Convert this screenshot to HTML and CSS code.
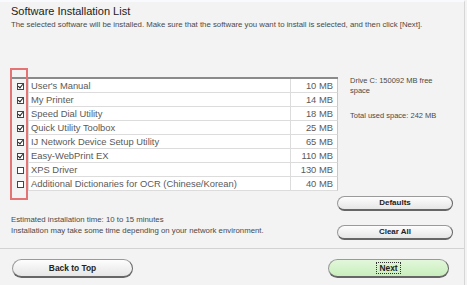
FILE: index.html
```html
<!DOCTYPE html>
<html lang="en">
<head>
  <meta charset="UTF-8">
  <title>Software Installation List</title>
  <link rel="stylesheet" href="styles.css">
</head>
<body>
  <div class="window">
    <header class="head">
      <h1>Software Installation List</h1>
      <p>The selected software will be installed. Make sure that the software you want to install is selected, and then click [Next].</p>
    </header>

    <main class="main">
      <section class="left">
        <div class="list">
          <div class="highlight"></div>
          <div class="row"><span class="cb on"></span><span class="name">User's Manual</span><span class="size">10 MB</span></div>
          <div class="row"><span class="cb on"></span><span class="name">My Printer</span><span class="size">14 MB</span></div>
          <div class="row"><span class="cb on"></span><span class="name">Speed Dial Utility</span><span class="size">18 MB</span></div>
          <div class="row"><span class="cb on"></span><span class="name">Quick Utility Toolbox</span><span class="size">25 MB</span></div>
          <div class="row"><span class="cb on"></span><span class="name">IJ Network Device Setup Utility</span><span class="size">65 MB</span></div>
          <div class="row"><span class="cb on"></span><span class="name">Easy-WebPrint EX</span><span class="size">110 MB</span></div>
          <div class="row"><span class="cb"></span><span class="name">XPS Driver</span><span class="size">130 MB</span></div>
          <div class="row"><span class="cb"></span><span class="name">Additional Dictionaries for OCR (Chinese/Korean)</span><span class="size">40 MB</span></div>
        </div>
        <div class="notes">
          <div>Estimated installation time: 10 to 15 minutes</div>
          <div>Installation may take some time depending on your network environment.</div>
        </div>
      </section>

      <aside class="right">
        <div class="info">Drive C: 150092 MB free<br>space</div>
        <div class="info used">Total used space: 242 MB</div>
        <button class="btn defaults">Defaults</button>
        <button class="btn clear">Clear All</button>
      </aside>
    </main>

    <footer class="foot">
      <button class="btn big">Back to Top</button>
      <button class="btn big next"><span class="focus">Next</span></button>
    </footer>
  </div>
</body>
</html>
```

FILE: styles.css
```css
body {
  margin: 0;
  background: #f3f3f3;
  font-family: "Liberation Sans", Arial, sans-serif;
  color: #333;
}
.window {
  width: 465px;
  height: 285px;
  border-right: 1px solid #d6d6d6;
  border-top: 2px solid #f8fafd;
  box-sizing: border-box;
}
.head { padding: 3px 0 0 11px; }
.head h1 {
  margin: 0;
  font-size: 11px;
  line-height: 13px;
  font-weight: normal;
  color: #222;
}
.head p {
  margin: 2px 0 0;
  font-size: 7.8px;
  line-height: 10px;
  color: #4a4a4a;
}
.main {
  display: flex;
  padding-left: 11px;
  margin-top: 47px;
}
.left { width: 327px; }
.list {
  position: relative;
  border-top: 2px solid #8a8a8a;
}
.highlight {
  position: absolute;
  left: -1px;
  top: -11px;
  width: 14px;
  height: 128px;
  border: 2px solid #e47474;
}
.row {
  display: grid;
  grid-template-columns: 17px 262px 48px;
  height: 14px;
}
.cb {
  align-self: center;
  justify-self: center;
  width: 5px;
  height: 5px;
  margin-left: 1px;
  border: 1px solid #444;
  background: #fff;
  position: relative;
}
.cb.on::after {
  content: "";
  position: absolute;
  left: 1px;
  top: -1px;
  width: 2px;
  height: 4px;
  border: solid #222;
  border-width: 0 1.2px 1.2px 0;
  transform: rotate(40deg);
}
.name, .size {
  background: #fff;
  border-bottom: 1px solid #dcdcdc;
  font-size: 9.4px;
  line-height: 13px;
  color: #5a5a5a;
  white-space: nowrap;
}
.name {
  border-left: 1px solid #dcdcdc;
  padding-left: 2px;
}
.size {
  border-left: 1px solid #dcdcdc;
  border-right: 1px solid #c8c8c8;
  text-align: right;
  padding-right: 4px;
}
.notes {
  margin-top: 23px;
  font-size: 7.8px;
  line-height: 11px;
  color: #4a4a4a;
}
.right {
  margin-left: -1px;
  width: 116px;
  display: flex;
  flex-direction: column;
}
.info {
  padding-left: 13px;
  font-size: 7.5px;
  line-height: 9.5px;
  color: #4a4a4a;
  margin-top: -1px;
}
.info.used { margin-top: 16px; }
.btn {
  font-family: "Liberation Sans", Arial, sans-serif;
  font-weight: bold;
  font-size: 8px;
  color: #222;
  height: 15px;
  padding: 0;
  border: 1px solid #9a9a9a;
  border-right-color: #666;
  border-bottom: 2px solid #666;
  border-radius: 9px;
  background: linear-gradient(#fdfdfd, #e6e6e6);
  box-sizing: border-box;
}
.defaults { margin-top: 75px; }
.clear { margin-top: 14px; }
.foot {
  margin-top: 8px;
  border-top: 1px solid #d2d2d2;
  padding: 10px 15px 0 12px;
  display: flex;
  justify-content: space-between;
}
.btn.big {
  width: 121px;
  height: 19px;
  border-radius: 10px;
  font-size: 8.4px;
}
.btn.next { background: linear-gradient(#e2f7da, #c9eebd); }
.focus {
  outline: 1px dotted #333;
  padding: 0 2px;
}
```
